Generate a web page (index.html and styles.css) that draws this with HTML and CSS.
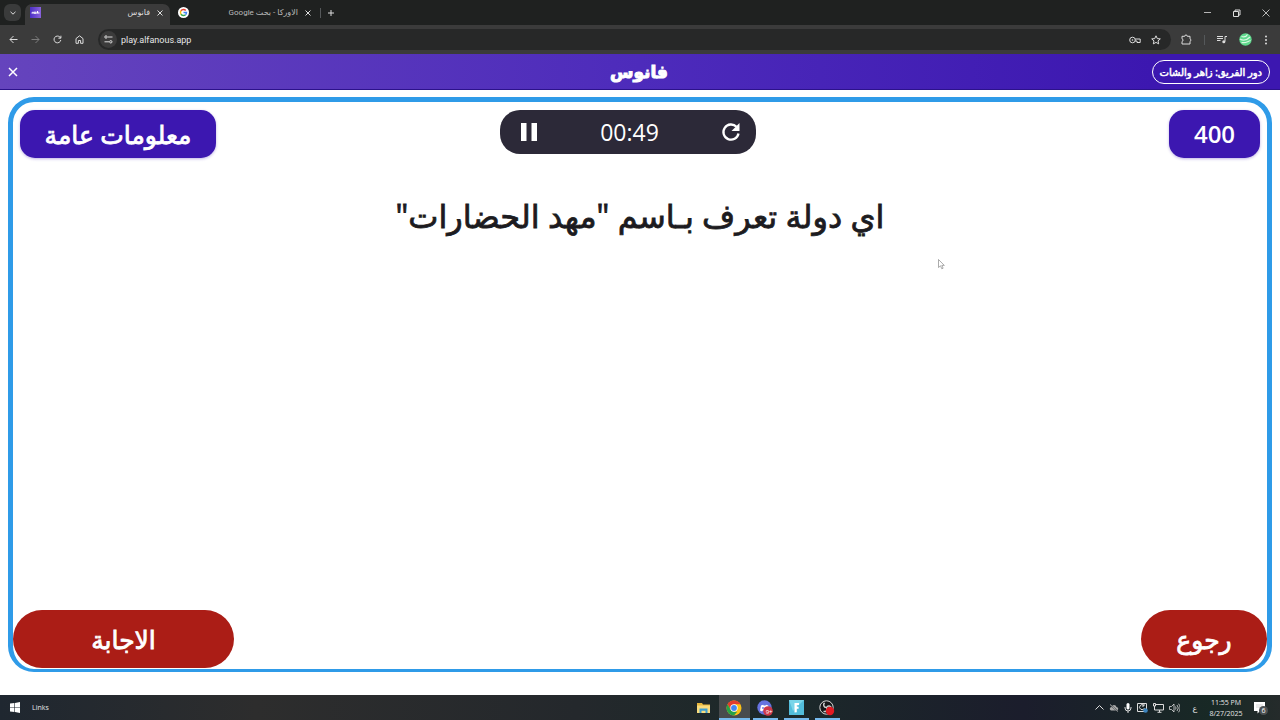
FILE: index.html
```html
<!DOCTYPE html>
<html lang="ar">
<head>
<meta charset="utf-8">
<title>فانوس</title>
<link rel="stylesheet" href="styles.css">
</head>
<body>
<div class="tabs">
  <button class="tab-search" aria-label="Search tabs"><svg width="8" height="8" viewBox="0 0 8 8"><path d="M1.5 2.8 4 5.2 6.500 2.800" class="line"/></svg></button>
  <div class="tab active">
    <svg width="11" height="11" viewBox="0 0 11 11"><defs><linearGradient id="fav"><stop stop-color="#4b2fc4"/><stop offset="1" stop-color="#8a62dc"/></linearGradient></defs><rect width="11" height="11" fill="url(#fav)"/><path d="M1.500 6h8M3 4.800v1.200M5 4.500v2.500M7.500 4v2" stroke="#fff" stroke-width="1.200"/></svg>
    <span class="tab-title" dir="rtl">فانوس</span>
    <button class="plain" aria-label="Close tab"><svg width="8" height="8" viewBox="0 0 8 8"><path d="m1.500 1.500 5 5m0-5-5 5" class="line"/></svg></button>
  </div>
  <div class="tab">
    <svg width="11" height="11" viewBox="0 0 22 22"><circle cx="11" cy="11" r="11" fill="#fff"/><g fill="none" stroke-width="3"><path d="M6 7.500A6 6 0 0 1 15.500 7" stroke="#ea4335"/><path d="M6 14.500a6 6 0 0 1 0-7" stroke="#fbbc05"/><path d="M6 14.500a6 6 0 0 0 9 1" stroke="#34a853"/><path d="M11 11h6a6 6 0 0 1-2 4.500" stroke="#4285f4"/></g></svg>
    <span class="tab-title" dir="rtl">الاوركا - بحث Google</span>
    <button class="plain" aria-label="Close tab"><svg width="8" height="8" viewBox="0 0 8 8"><path d="m1.500 1.500 5 5m0-5-5 5" class="line"/></svg></button>
  </div>
  <span class="divider"></span>
  <button class="plain new-tab" aria-label="New tab"><svg width="8" height="8" viewBox="0 0 8 8"><path d="M4 1v6M1 4h6" class="line"/></svg></button>
  <div class="window-controls">
    <button class="plain" aria-label="Minimize"><svg width="8" height="8" viewBox="0 0 8 8"><path d="M0 3.500h7" class="line thin"/></svg></button>
    <button class="plain" aria-label="Restore"><svg width="8" height="8" viewBox="0 0 8 8"><path d="M.5 2.500h5v5h-5zM2 2.500v-1.500h5v5H5.500" class="line"/></svg></button>
    <button class="plain" aria-label="Close"><svg width="8" height="8" viewBox="0 0 8 8"><path d="m.5.5 7 7m0-7-7 7" class="line thin"/></svg></button>
  </div>
</div>
<div class="toolbar">
  <div class="nav">
    <button class="plain" aria-label="Back"><svg width="9" height="9" viewBox="0 0 9 9"><path d="M8.500 4.500H1M4.500 1 1 4.500 4.500 8" class="line"/></svg></button>
    <button class="plain dim" aria-label="Forward"><svg width="9" height="9" viewBox="0 0 9 9"><path d="M.5 4.500H8M4.500 1 8 4.500 4.500 8" class="line"/></svg></button>
    <button class="plain" aria-label="Reload"><svg width="9" height="9" viewBox="0 0 9 9"><path d="M7.800 5A3.400 3.400 0 1 1 7 2.200L7.800 3M7.900.7v2.500H5.400" class="line"/></svg></button>
    <button class="plain" aria-label="Home"><svg width="9" height="9" viewBox="0 0 9 9"><path d="M1 8.300V3.600L4.500.8 8 3.600v4.700H5.600V5.500H3.400v2.800z" class="line"/></svg></button>
  </div>
  <div class="address">
    <button class="site-info" aria-label="Site information"><svg width="9" height="9" viewBox="0 0 9 9"><path d="M4 2h4.500M.5 6.800H5" class="line"/><circle cx="2" cy="2" r="1.200" class="line"/><circle cx="6.800" cy="6.800" r="1.200" class="line"/></svg></button>
    <input class="url" aria-label="Address" value="play.alfanous.app">
    <svg width="12" height="8" viewBox="0 0 12 8"><circle cx="3.500" cy="4" r="2.800" class="line"/><circle cx="3.500" cy="4" r=".8" fill="#ddd"/><path d="M6.200 3h5v3.500H8V5H6.200" class="line"/></svg>
    <svg width="10" height="10" viewBox="0 0 10 10"><path d="m5 .8 1.300 2.800 3 .3-2.300 2 .7 3L5 7.400 2.300 8.900l.7-3-2.300-2 3-.3z" class="line"/></svg>
  </div>
  <div class="extras">
    <svg width="11" height="11" viewBox="0 0 11 11"><path d="M1 2.300h2.700a1.300 1.300 0 0 1 2.600 0H9v2.500a1.400 1.400 0 0 1 0 2.600V10H1V7.500a1.400 1.400 0 0 0 0-2.700z" class="line"/></svg>
    <span class="divider"></span>
    <svg width="10" height="9" viewBox="0 0 10 9"><path d="M0 1.500h6M0 3.500h6M0 5.500h3.500M8 6.500v-5h2" class="line"/><circle cx="6.800" cy="6.700" r="1.500" fill="#ddd"/></svg>
    <svg width="13" height="13" viewBox="0 0 13 13"><circle cx="6.500" cy="6.500" r="6.200" fill="#5fd88d"/><path d="M1 6c3 2 7 1 10-2M2.500 9.500c4 1 6-1 9-2M2.500 3.500c3 1 5 0 6-2" fill="none" stroke="#d9f8e2" stroke-width="1.200"/></svg>
    <svg width="4" height="10" viewBox="0 0 4 10" fill="#ddd"><circle cx="2" cy="1.500" r="1"/><circle cx="2" cy="5" r="1"/><circle cx="2" cy="8.500" r="1"/></svg>
  </div>
</div>

<header class="header">
  <button class="plain leave" aria-label="إغلاق"><svg width="10" height="10" viewBox="0 0 10 10"><path d="m1 1 8 8m0-8-8 8" stroke="#fff" stroke-width="1.500"/></svg></button>
  <h1 class="brand" dir="rtl">فانوس</h1>
  <span class="turn" dir="rtl">دور الفريق: زاهر والشات</span>
</header>

<main class="page">
  <section class="board">
    <div class="top-row">
      <span class="badge category" dir="rtl">معلومات عامة</span>
      <div class="timer">
        <button class="plain" aria-label="إيقاف مؤقت"><svg width="18" height="20" viewBox="0 0 18 20"><path d="M1 1h5.500v18H1zM11.500 1H17v18h-5.500z" fill="#fff"/></svg></button>
        <span class="time">00:49</span>
        <button class="plain" aria-label="إعادة"><svg width="20" height="20" viewBox="0 0 20 20"><path d="M17.500 11.500A7.600 7.600 0 1 1 15.500 4.800" fill="none" stroke="#fff" stroke-width="2.300"/><path d="M18.500 1v8h-8z" fill="#fff"/></svg></button>
      </div>
      <span class="badge points">400</span>
    </div>
    <h2 class="question" dir="rtl">اي دولة تعرف بـاسم "مهد الحضارات"</h2>
    <div class="actions">
      <button class="action answer" dir="rtl">الاجابة</button>
      <button class="action back" dir="rtl">رجوع</button>
    </div>
  </section>
</main>

<footer class="taskbar">
  <div class="start">
    <button class="plain" aria-label="Start"><svg width="10" height="11" viewBox="0 0 10 11"><path d="M0 1.600 4.400 1v4.200H0zM5 .9 10 0v5.200H5zM0 5.800h4.400V10L0 9.400zM5 5.800h5V11l-5-.9z" fill="#fff"/></svg></button>
    <span>Links</span>
  </div>
  <div class="apps">
    <button class="app" aria-label="File Explorer"><svg width="15" height="14" viewBox="0 0 15 14"><path d="M1 2h5l1 1.500h7V12H1z" fill="#e8b73c"/><path d="M1 4.500h13V12H1z" fill="#fbdc7c"/><path d="M3.500 7.500h8V12H9.500V9.800h-4V12h-2z" fill="#3f9fd0"/></svg></button>
    <button class="app open current" aria-label="Chrome"><svg width="16" height="16" viewBox="0 0 16 16"><circle cx="8" cy="8" r="7.500" fill="#fbc116"/><path d="M1.500 4.300A7.500 7.500 0 0 1 14.500 4.300H8L4.800 9.900z" fill="#e33b2e"/><path d="M1.500 4.300 4.800 9.900 8 11.700h3.200L8 15.500A7.500 7.500 0 0 1 1.500 4.300z" fill="#26a148"/><circle cx="8" cy="8" r="3.700" fill="#fff"/><circle cx="8" cy="8" r="2.900" fill="#4285f4"/></svg></button>
    <button class="app open" aria-label="Discord, 9+"><svg width="16" height="16" viewBox="0 0 16 16"><circle cx="7.500" cy="7.500" r="7.200" fill="#6673df"/><path d="M3 10.500 4 5.500l2.200-.8.5.7h1.800l.5-.7 2.200.8 1 5-2.100.9-.8-1H5.800l-.8 1z" fill="#fff"/><circle cx="6" cy="8" r=".9" fill="#6673df"/><circle cx="11" cy="11" r="4.800" fill="#cf3948"/></svg><span class="count">9+</span></button>
    <button class="app open" aria-label="Fortnite"><svg width="15" height="15" viewBox="0 0 15 15"><path d="M0 0h15v15H0z" fill="#53bddb"/><path d="M0 0h15L4 11z" fill="#79d5e9"/><path d="M5.500 3h4.500v2H7.800v1.800h1.800v2H7.800v3.400l-2.300.3z" fill="#fff"/></svg></button>
    <button class="app open" aria-label="OBS"><svg width="16" height="16" viewBox="0 0 16 16"><circle cx="7.500" cy="7.500" r="6.700" fill="#171719" stroke="#d8d8d8"/><g fill="none" stroke="#ccc" stroke-width="1.500"><path d="M7.500 7.500c-3 0-3.500-3-2-4.800M7.500 7.500c1.500-2.600 4-1.700 5 .5M7.500 7.500c1.500 2.600-.5 4.500-3 4"/></g><circle cx="11" cy="11" r="4.200" fill="#e31a22"/></svg></button>
  </div>
  <div class="tray">
    <svg width="9" height="10" viewBox="0 0 9 10"><path d="m.5 6.500 4-4 4 4" class="line"/></svg>
    <svg width="10" height="10" viewBox="0 0 10 10"><path d="M2 7.500a1.800 1.800 0 0 1 .5-3.500 2.600 2.600 0 0 1 5 0A1.800 1.800 0 0 1 8 7.500z" fill="#aaa"/><path d="m1 1.500 8 7" stroke="#22282c" stroke-width="1.400"/><path d="m1 1.500 8 7" stroke="#ccc" stroke-width=".8"/></svg>
    <svg width="8" height="10" viewBox="0 0 8 10"><rect x="2.500" width="3" height="6.500" rx="1.500" fill="#fff"/><path d="M1 4v1a3 3 0 0 0 6 0V4M4 8v2" class="line"/></svg>
    <svg width="11" height="11" viewBox="0 0 11 11"><path d="M.5 1.500h9v8h-9zM7 3.500a2.500 2.500 0 1 0 .5 2.500M7 2v2H5" class="line"/><circle cx="8.500" cy="8.500" r="2.300" fill="#3b83bd"/></svg>
    <svg width="11" height="10" viewBox="0 0 11 10"><path d="M3 1.500h7.500V7H3M4.500 9.300h4M6.500 7v2M.5.500h2v2.500h-2zM1.500 3v4H3" class="line"/></svg>
    <svg width="11" height="10" viewBox="0 0 11 10"><path d="M.5 3.500h2L5 1v8L2.500 6.500h-2zM6.500 3.500a2.500 2.500 0 0 1 0 3M8 2a4.500 4.500 0 0 1 0 6M9.500.7a6.500 6.500 0 0 1 0 8.600" class="line thin"/></svg>
    <span class="lang" dir="rtl">ع</span>
    <time class="clock"><span>11:55 PM</span><span>8/27/2025</span></time>
    <button class="plain notice" aria-label="6 notifications"><svg width="12" height="12" viewBox="0 0 12 12"><path d="M0 0h11v9H6l-2.500 2.500V9H0z" fill="#fff"/><path d="M2 3h7M2 5h7" stroke="#bbb" stroke-width=".6"/></svg><span class="notice-count">6</span></button>
  </div>
</footer>
<svg class="cursor" width="7" height="11" viewBox="0 0 7 11"><path d="M.5.500v8l2-1.700 1.300 3 1.300-.6-1.300-2.800h2.500z" fill="#fff" stroke="#888" stroke-width=".7"/></svg>
</body>
</html>
```
FILE: styles.css
```css
* { box-sizing: border-box; }

body {
  margin: 0;
  min-height: 100vh;
  display: flex;
  flex-direction: column;
  background: #fff;
  color: #1c1b20;
  font-family: "Open Sans", "DejaVu Sans", sans-serif;
}

svg { display: block; flex: none; }
button { font-family: inherit; color: inherit; border: 0; padding: 0; cursor: pointer; }
.plain { display: flex; background: none; }
.line { fill: none; stroke: #ddd; stroke-width: 1; }
.thin { stroke-width: 0.8; }
.dim { opacity: 0.4; }
.divider { width: 1px; height: 10px; background: #55585a; }

/* Browser chrome */
.tabs {
  height: 25px;
  display: flex;
  align-items: center;
  padding-left: 4px;
  background: #1f2120;
  color: #ddd;
  font-family: Roboto, "DejaVu Sans", sans-serif;
  font-size: 8px;
}
.tab-search {
  width: 17px;
  height: 17px;
  display: grid;
  place-items: center;
  border-radius: 6px;
  background: #3a3b3b;
}
.tab {
  width: 147px;
  height: 21px;
  align-self: flex-end;
  display: flex;
  align-items: center;
  gap: 6px;
  padding: 0 8px 4px 5px;
  color: #bbb;
}
.tab.active {
  width: 145px;
  margin-left: 4px;
  margin-right: 3px;
  padding-right: 6px;
  background: #3b3b3b;
  color: #ddd;
  border-radius: 7px 7px 0 0;
}
.tab-title { flex: 1; white-space: nowrap; }
.new-tab { margin-left: 6px; }
.window-controls { display: flex; gap: 21px; margin-left: auto; padding-right: 10px; }

.toolbar {
  height: 29px;
  display: flex;
  align-items: center;
  padding: 0 12px 0 9px;
  background: #3b3b3b;
}
.nav { display: flex; gap: 13px; margin-right: 14px; }
.address {
  flex: 1;
  height: 21px;
  display: flex;
  align-items: center;
  gap: 10px;
  padding: 0 10px 0 2px;
  border-radius: 11px;
  background: #272828;
}
.site-info {
  width: 17px;
  height: 17px;
  display: grid;
  place-items: center;
  border-radius: 50%;
  background: #3b3b3b;
}
.url {
  flex: 1;
  min-width: 0;
  margin-left: -6px;
  padding: 0;
  border: 0;
  outline: 0;
  background: none;
  color: #e6e6e6;
  font: 9px Roboto, sans-serif;
}
.extras { display: flex; align-items: center; gap: 12px; margin-left: 10px; }

/* Game header */
.header {
  height: 36px;
  display: grid;
  grid-template-columns: 1fr auto 1fr;
  align-items: center;
  padding: 0 10px 0 8px;
  border-bottom: 1px solid #2c128a;
  background: linear-gradient(90deg, #6544bd, #4d2bbb 50%, #3c17b0 90%);
  color: #fff;
}
.brand {
  margin: 0;
  font-size: 17px;
  line-height: 24px;
  font-weight: 700;
  -webkit-text-stroke: 1px;
}
.turn {
  justify-self: end;
  height: 24px;
  padding: 0 7px;
  border: 1px solid #fff;
  border-radius: 12px;
  font-size: 10px;
  line-height: 22px;
  -webkit-text-stroke: 0.5px;
  white-space: nowrap;
}

/* Question board */
.page { flex: 1; display: flex; padding: 7px 8px 23px; }
.board {
  flex: 1;
  display: flex;
  flex-direction: column;
  border: 5px solid #2f9be8;
  border-bottom-width: 3px;
  border-radius: 26px;
}
.top-row {
  display: grid;
  grid-template-columns: 20fr 256px 21fr;
  align-items: start;
  padding: 8px 7px 0;
}
.badge {
  height: 48px;
  border-radius: 15px;
  background: #3c17b0;
  box-shadow: 0 1px 3px #3c17b055;
  color: #fff;
  font-size: 24px;
  line-height: 48px;
  text-align: center;
  white-space: nowrap;
}
.category { width: 196px; font-size: 25px; -webkit-text-stroke: 0.8px; }
.points { width: 91px; justify-self: end; font-weight: 600; }
.timer {
  height: 44px;
  display: flex;
  align-items: center;
  justify-content: space-between;
  padding: 0 15px 0 20px;
  border-radius: 20px;
  background: #2c2938;
  color: #fff;
}
.time { font-size: 23px; line-height: 44px; }
.question {
  margin: 34px 0 0;
  font-size: 32px;
  line-height: 48px;
  font-weight: 400;
  -webkit-text-stroke: 0.8px;
  text-align: center;
}
.actions { display: flex; justify-content: space-between; margin-top: auto; padding-bottom: 1px; }
.action {
  height: 58px;
  border-radius: 29px;
  background: #ab1d16;
  color: #fff;
  font-size: 25px;
  -webkit-text-stroke: 0.8px;
}
.answer { width: 221px; }
.back { width: 126px; }

/* Desktop taskbar */
.taskbar {
  height: 25px;
  display: grid;
  grid-template-columns: 8fr auto 5fr;
  align-items: center;
  padding: 0 14px 0 10px;
  background: linear-gradient(90deg, #1f2730, #2d2d2d 20%, #24282c 45%, #1c2929 60%, #1b1d2c 80%, #182925 95%, #252b2b);
  color: #e6e6e6;
  font-size: 7px;
  line-height: 11px;
}
.start { display: flex; align-items: center; gap: 12px; }
.apps { display: flex; }
.app {
  position: relative;
  width: 31px;
  height: 25px;
  display: grid;
  place-items: center;
  background: none;
}
.open::after {
  content: "";
  position: absolute;
  inset: auto 3px 0;
  height: 2px;
  background: #76b9ed;
}
.current { background: #484b4d; }
.current::after { inset: auto 0 0; }
.count { position: absolute; right: 8px; bottom: 5px; color: #fff; font-size: 6px; line-height: 6px; }
.tray { display: flex; align-items: center; justify-content: flex-end; gap: 5px; }
.lang { width: 14px; margin-left: 3px; text-align: center; font-size: 8px; }
.clock { width: 38px; display: flex; flex-direction: column; text-align: center; white-space: nowrap; }
.notice { position: relative; margin-left: 4px; }
.notice-count {
  position: absolute;
  left: 5px;
  top: 4px;
  width: 9px;
  height: 9px;
  border-radius: 50%;
  background: #4b5052;
  color: #fff;
  font-size: 7px;
  line-height: 9px;
}

.cursor { position: absolute; left: 938px; top: 259px; }
```
